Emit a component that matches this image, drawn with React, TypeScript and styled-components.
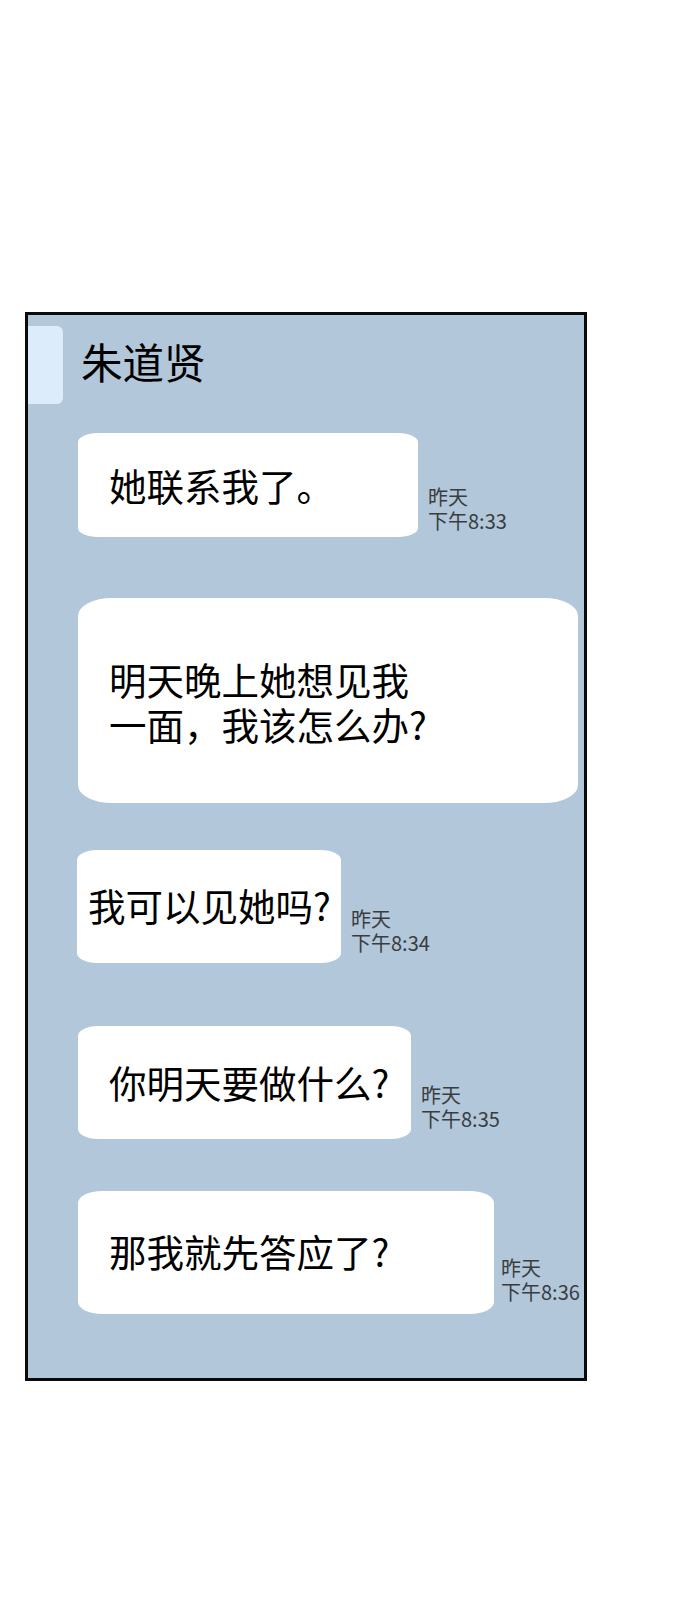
import styled, { createGlobalStyle } from "styled-components";

const GlobalStyle = createGlobalStyle`
  html, body {
    margin: 0;
    background: #ffffff;
  }
  body {
    font-family: "Noto Sans CJK SC", "Noto Sans", sans-serif;
  }
`;

type Msg = {
  lines: string[];
  width: number;
  height: number;
  top: number;
  indent: number;
  left: number;
  lift: number;
  radius: string;
  time?: string;
  timeBottom?: number;
  timeGap?: number;
};

const messages: Msg[] = [
  { lines: ["她联系我了。"], width: 340, height: 104, top: 29, indent: 50, left: 31, lift: 2, radius: "20px / 9px", time: "下午8:33", timeBottom: 5, timeGap: 10 },
  { lines: ["明天晚上她想见我", "一面，我该怎么办?"], width: 500, height: 205, top: 61, indent: 50, left: 31, lift: 0, radius: "34px / 18px" },
  { lines: ["我可以见她吗?"], width: 264, height: 113, top: 47, indent: 49, left: 11, lift: 5, radius: "20px / 10px", time: "下午8:34", timeBottom: 9, timeGap: 10 },
  { lines: ["你明天要做什么?"], width: 333, height: 113, top: 63, indent: 50, left: 31, lift: 3, radius: "20px / 10px", time: "下午8:35", timeBottom: 9, timeGap: 10 },
  { lines: ["那我就先答应了?"], width: 416, height: 123, top: 52, indent: 50, left: 31, lift: 4, radius: "24px / 12px", time: "下午8:36", timeBottom: 11, timeGap: 7 },
];

export default function App() {
  return (
    <>
      <GlobalStyle />
      <Page>
        <Panel>
          <Header>
            <Avatar />
            <Name>朱道贤</Name>
          </Header>
          {messages.map((m) => (
            <Row key={m.lines[0]} $top={m.top} $indent={m.indent}>
              <Bubble $width={m.width} $height={m.height} $left={m.left} $lift={m.lift} $radius={m.radius}>
                <Text>
                  {m.lines.map((line) => (
                    <Line key={line}>{line}</Line>
                  ))}
                </Text>
              </Bubble>
              {m.time && (
                <Time $bottom={m.timeBottom ?? 0} $gap={m.timeGap ?? 10}>
                  <Line>昨天</Line>
                  <Line>{m.time}</Line>
                </Time>
              )}
            </Row>
          ))}
        </Panel>
      </Page>
    </>
  );
}

const Page = styled.div`
  box-sizing: border-box;
  width: 690px;
  height: 1624px;
  padding: 312px 0 0 25px;
  background: #ffffff;
  overflow: hidden;
`;

const Panel = styled.div`
  box-sizing: border-box;
  width: 562px;
  height: 1069px;
  border: 3px solid #0a0a0a;
  background: #b2c7da;
  display: flex;
  flex-direction: column;
`;

const Header = styled.div`
  display: flex;
  align-items: center;
  gap: 18px;
  margin-top: 11px;
`;

const Avatar = styled.div`
  width: 35px;
  height: 78px;
  border-radius: 0 6px 6px 0;
  background: #dcecfb;
`;

const Name = styled.div`
  padding-bottom: 8px;
  font-size: 41.5px;
  line-height: 56px;
  color: #000000;
`;

const Row = styled.div<{ $top: number; $indent: number }>`
  display: flex;
  align-items: flex-end;
  margin: ${({ $top }) => $top}px 0 0 ${({ $indent }) => $indent}px;
`;

const Bubble = styled.div<{ $width: number; $height: number; $left: number; $lift: number; $radius: string }>`
  box-sizing: border-box;
  flex: none;
  display: flex;
  align-items: center;
  width: ${({ $width }) => $width}px;
  height: ${({ $height }) => $height}px;
  padding: 0 0 ${({ $lift }) => $lift}px ${({ $left }) => $left}px;
  border-radius: ${({ $radius }) => $radius};
  background: #ffffff;
`;

const Text = styled.div`
  font-size: 37.5px;
  line-height: 45px;
  color: #000000;
`;

const Line = styled.div`
  white-space: nowrap;
`;

const Time = styled.div<{ $bottom: number; $gap: number }>`
  margin: 0 0 ${({ $bottom }) => $bottom}px ${({ $gap }) => $gap}px;
  font-size: 20px;
  line-height: 23.5px;
  color: #3a3d40;
`;
